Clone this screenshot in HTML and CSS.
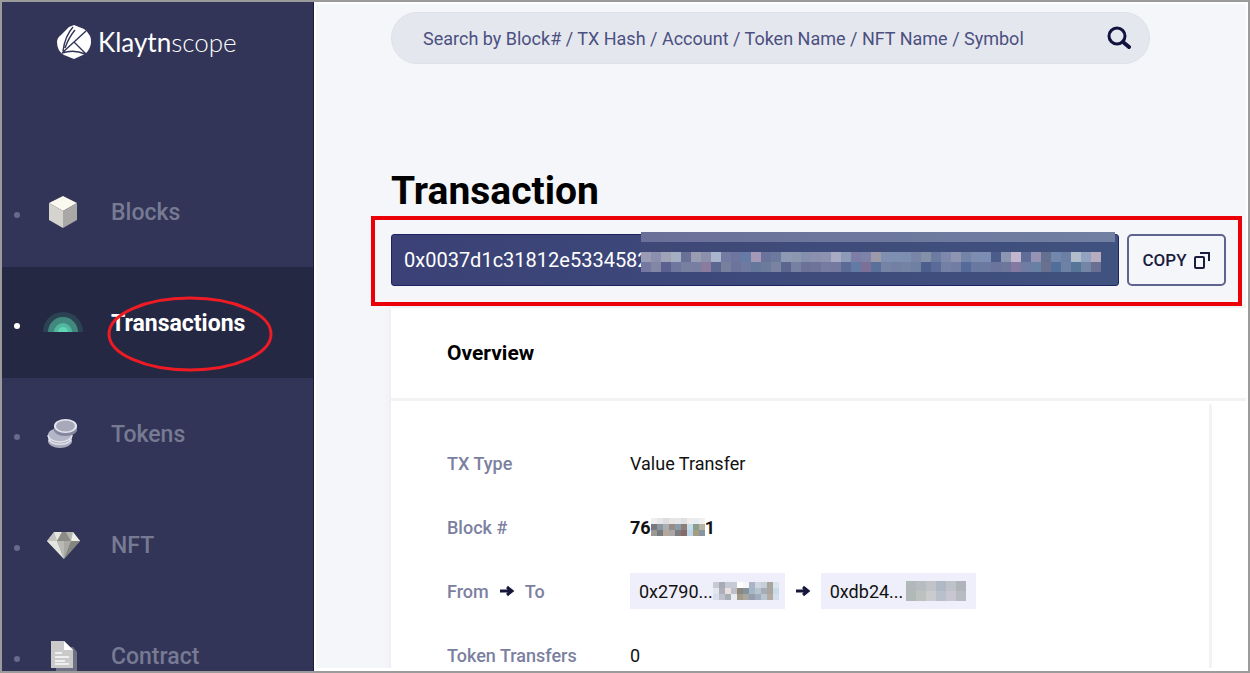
FILE: index.html
```
<!DOCTYPE html>
<html lang="en">
<head>
    <meta charset="UTF-8">
    <meta name="viewport" content="width=device-width, initial-scale=1.0">
    <title>Klaytnscope</title>
    <link rel="stylesheet" href="styles.css">
</head>
<body>
    <!-- Sidebar Navigation -->
    <nav class="sidebar">
        <a href="#" class="logo">
            <svg width="36" height="36" viewBox="0 0 36 36">
                <path d="M18 1 L28 5 Q36 11 35 19 Q34 26 29 30 L18 35 L8 31 Q1 27 1 18 Q1 14 5 11 L13 3 Z" fill="#fff"/>
                <path d="M17 3 Q9 12 7 27 M19 6 Q13 13 9 24 M30 7 L6 29 M18 18 L30 30 M6 29 Q18 25 29 30" fill="none" stroke="#323557" stroke-width="1.400"/>
            </svg>
            <span class="logo-text">Klaytn<span class="logo-light">scope</span></span>
        </a>
        <ul class="menu">
            <li>
                <a href="#" class="nav-link">
                    <span class="dot"></span>
                    <svg class="nav-icon" width="42" height="42" viewBox="0 0 42 42">
                        <path d="M21 5 L35 12 L21 20 L7 12 Z" fill="#fbf8ee"/>
                        <path d="M7 12 L21 20 V37 L7 29 Z" fill="#d5d3ce"/>
                        <path d="M35 12 L21 20 V37 L35 29 Z" fill="#aaa8a6"/>
                    </svg>
                    <span class="nav-text">Blocks</span>
                </a>
            </li>
            <li>
                <a href="#" class="nav-link active">
                    <span class="dot"></span>
                    <svg class="nav-icon" width="42" height="42" viewBox="0 0 42 42">
                        <path d="M1 30 A20 20 0 0 1 41 30 Z" fill="#2b4253"/>
                        <path d="M6 30 A15 15 0 0 1 36 30 Z" fill="#41897f"/>
                        <path d="M12 30 A9 9 0 0 1 30 30 Z" fill="#52b79f"/>
                        <path d="M16 30 A5 5 0 0 1 26 30 Z" fill="#5fd6b6"/>
                    </svg>
                    <span class="nav-text">Transactions</span>
                    <svg class="circle-mark" width="166" height="76" viewBox="0 0 166 76">
                        <ellipse cx="83" cy="38" rx="81" ry="36" fill="none" stroke="#ed1c24" stroke-width="3"/>
                    </svg>
                </a>
            </li>
            <li>
                <a href="#" class="nav-link">
                    <span class="dot"></span>
                    <svg class="nav-icon" width="42" height="42" viewBox="0 0 42 42">
                        <path d="M6 22 V28 A12 7 0 0 0 30 28 V22 Z" fill="#a9abbd"/>
                        <ellipse cx="18" cy="22" rx="12" ry="7" fill="#b4b6c8"/>
                        <path d="M6 22 A12 7 0 0 0 30 22 M7 27 A12 7 0 0 0 29 27" fill="none" stroke="#e2e3ec" stroke-width="1.500"/>
                        <path d="M12 14 V18 A12 7 0 0 0 35 18 V14 Z" fill="#8486a0"/>
                        <ellipse cx="23.500" cy="13" rx="11.500" ry="7" fill="#e6e7ee"/>
                        <ellipse cx="23.500" cy="13" rx="9.500" ry="5.500" fill="#a7a9bb"/>
                    </svg>
                    <span class="nav-text">Tokens</span>
                </a>
            </li>
            <li>
                <a href="#" class="nav-link">
                    <span class="dot"></span>
                    <svg class="nav-icon" width="42" height="42" viewBox="0 0 42 42">
                        <path d="M12 8 H31 L38 17 L22 35 L5 17 Z" fill="#a9a9a5"/>
                        <path d="M12 8 L15 17 H5 Z" fill="#c4c4c0"/>
                        <path d="M12 8 L20 8 L15 17 Z" fill="#e6e6e2"/>
                        <path d="M20 8 H24 L29 17 H15 Z" fill="#8c8c87"/>
                        <path d="M31 8 L24 8 L29 17 Z" fill="#b5b5b0"/>
                        <path d="M31 8 L38 17 H29 Z" fill="#ecece8"/>
                        <path d="M5 17 H15 L22 35 Z" fill="#e4e4e0"/>
                        <path d="M15 17 H22 V35 Z" fill="#b9b9b5"/>
                        <path d="M38 17 H29 L22 35 Z" fill="#85857f"/>
                    </svg>
                    <span class="nav-text">NFT</span>
                </a>
            </li>
            <li>
                <a href="#" class="nav-link">
                    <span class="dot"></span>
                    <svg class="nav-icon" width="42" height="42" viewBox="0 0 42 42">
                        <path d="M14 12 H31 L35 17 V38 H14 Z" fill="#6f7285"/>
                        <path d="M9 6 H22 L31 15 V33 H9 Z" fill="#cacaca"/>
                        <path d="M22 6 L31 15 H22 Z" fill="#fff"/>
                        <path d="M13 18 H20 M13 22 H27 M13 26 H23 M13 29 H27" stroke="#efefef" stroke-width="2"/>
                    </svg>
                    <span class="nav-text">Contract</span>
                </a>
            </li>
        </ul>
    </nav>

    <!-- Page Content -->
    <main class="content">
        <form class="search">
            <input type="text" class="search-input" aria-label="Search" placeholder="Search by Block# / TX Hash / Account / Token Name / NFT Name / Symbol">
            <button type="button" class="search-button" aria-label="Search">
                <svg width="26" height="26" viewBox="0 0 26 26" fill="none" stroke="#11123d">
                    <circle cx="12" cy="11" r="8" stroke-width="3"/>
                    <path d="M18 17 L24 22" stroke-width="4" stroke-linecap="round"/>
                </svg>
            </button>
        </form>

        <h1>Transaction</h1>

        <div class="hash-row">
            <div class="hash">
                <span class="hash-text">0x0037d1c31812e5334582</span>
                <div class="hash-cover">
                    <div class="hash-band"></div>
                    <svg class="mosaic" id="hashMosaic"></svg>
                </div>
            </div>
            <button type="button" class="copy-button">
                COPY
                <svg width="18" height="18" viewBox="0 0 18 18" fill="none" stroke="#1c1d3e" stroke-width="2">
                    <rect x="2" y="6" width="9" height="11" rx="1"/>
                    <path d="M7 2 H16 V10"/>
                </svg>
            </button>
            <div class="box-mark"></div>
        </div>

        <section class="card">
            <h2>Overview</h2>
            <dl class="details">
                <dt>TX Type</dt>
                <dd>Value Transfer</dd>

                <dt>Block #</dt>
                <dd class="block-number">76<svg class="mosaic" id="blockMosaic"></svg>1</dd>

                <dt>
                    From
                    <svg class="arrow" width="16" height="12" viewBox="0 0 16 12">
                        <path d="M1 6 H13 M8 2 L13 6 L8 10" fill="none" stroke="#15163a" stroke-width="3"/>
                    </svg>
                    To
                </dt>
                <dd>
                    <a href="#" class="address">0x2790...<svg class="mosaic" id="fromMosaic"></svg></a>
                    <svg class="arrow" width="16" height="12" viewBox="0 0 16 12">
                        <path d="M1 6 H13 M8 2 L13 6 L8 10" fill="none" stroke="#15163a" stroke-width="3"/>
                    </svg>
                    <a href="#" class="address address-to">0xdb24...<svg class="mosaic" id="toMosaic"></svg></a>
                </dd>

                <dt>Token Transfers</dt>
                <dd>0</dd>
            </dl>
        </section>
    </main>

    <script src="script.js"></script>
</body>
</html>
```
FILE: styles.css
```
* {
    box-sizing: border-box;
}

body {
    margin: 0;
    height: 100vh;
    display: flex;
    overflow: hidden;
    border: 2px solid #9b9b9b;
    font-family: Roboto, "Liberation Sans", sans-serif;
    background-color: #f5f6f9;
}

a {
    text-decoration: none;
}

/* Sidebar styles */
.sidebar {
    width: 312px;
    flex-shrink: 0;
    overflow: hidden;
    background-color: #323557;
    border-right: 1px solid #1a1c42;
}

.logo {
    display: flex;
    align-items: center;
    gap: 6px;
    height: 154px;
    padding: 22px 0 96px 54px;
}

.logo-text {
    font-family: Lato, sans-serif;
    font-size: 26px;
    color: #fff;
}

.logo-light {
    font-weight: 300;
}

/* Sidebar menu styles */
.menu {
    list-style: none;
    margin: 0;
    padding: 0;
}

.nav-link {
    position: relative;
    display: flex;
    align-items: center;
    height: 111px;
    padding-left: 12px;
    color: #777a93;
    font-size: 23px;
    font-weight: 500;
}

.dot {
    width: 6px;
    height: 6px;
    margin-top: 6px;
    border-radius: 50%;
    background-color: #676a88;
}

.nav-icon {
    margin-left: 22px;
}

.nav-text {
    margin-left: 27px;
    padding-top: 2px;
}

.active {
    background-color: #252843;
    color: #fff;
    font-weight: 700;
}

.active .dot {
    background-color: #fff;
}

.circle-mark {
    position: absolute;
    left: 105px;
    top: 29px;
}

/* Content area styles */
.content {
    flex: 1;
    min-width: 0;
    overflow: hidden;
    padding: 8px 0 0 75px;
    border: 2px solid #fff;
    border-bottom-width: 3px;
    background-color: #f5f6f9;
}

.search {
    display: flex;
    align-items: center;
    height: 52px;
    margin-right: 96px;
    padding: 0 18px 0 31px;
    border: 1px solid #dfe1ea;
    border-radius: 26px;
    background-color: #e5e7ef;
}

.search-input {
    flex: 1;
    min-width: 0;
    padding: 0;
    border: none;
    outline: none;
    background: none;
    color: #4b5080;
    font-family: inherit;
    font-size: 18px;
}

.search-input::placeholder {
    color: #4b5080;
    opacity: 1;
}

.search-button {
    display: flex;
    padding: 0;
    border: none;
    background: none;
    cursor: pointer;
}

h1 {
    margin: 103px 0 19px;
    font-size: 39px;
    font-weight: 700;
    line-height: 48px;
    color: #000;
}

/* Hash and copy button */
.hash-row {
    position: relative;
    display: flex;
    gap: 8px;
    margin-right: 20px;
}

.hash {
    position: relative;
    flex: 1;
    height: 52px;
    padding-left: 12px;
    border: 1px solid #1d2260;
    border-radius: 3px;
    background: linear-gradient(to right, #3b4176, #40527f);
}

.hash-text {
    font-size: 20px;
    line-height: 50px;
    color: #fff;
}

.hash-cover {
    position: absolute;
    left: 249px;
    right: 3px;
    top: -3px;
    height: 40px;
    background: linear-gradient(to right, #3f4877, #40527f);
}

.hash-band {
    height: 10px;
    margin-bottom: 10px;
    background: linear-gradient(to right, #6b7099, #707fa2);
}

.copy-button {
    display: flex;
    align-items: center;
    justify-content: center;
    gap: 6px;
    width: 99px;
    padding: 0;
    border: 2px solid #5f648f;
    border-radius: 5px;
    background-color: #f5f6f9;
    color: #1c1d3e;
    font-family: inherit;
    font-size: 17px;
    font-weight: 500;
    cursor: pointer;
}

.box-mark {
    position: absolute;
    inset: -18px -16px -20px -20px;
    border: 4px solid #ec0008;
    pointer-events: none;
}

/* Overview card */
.card {
    margin-top: 22px;
    background-color: #fff;
    box-shadow: 0 0 6px #e3e5ee;
}

h2 {
    margin: 0;
    padding: 0 56px;
    border-bottom: 3px solid #f3f3f4;
    font-size: 21px;
    font-weight: 700;
    line-height: 90px;
    color: #000;
}

.details {
    display: grid;
    grid-template-columns: 183px 1fr;
    grid-auto-rows: 64px;
    align-items: center;
    margin: 3px 34px 0 0;
    padding: 27px 0 0 56px;
    border-right: 3px solid #f3f3f4;
    font-size: 18px;
}

.details dt,
.details dd {
    display: flex;
    align-items: center;
    margin: 0;
    white-space: nowrap;
}

.details dt {
    color: #7c80a0;
    font-weight: 500;
}

.details dd {
    color: #111;
}

.details .block-number {
    font-weight: 700;
}

.arrow {
    margin: 0 10px;
}

.address {
    display: flex;
    align-items: center;
    height: 36px;
    padding: 0 6px 0 9px;
    background-color: #eeeffa;
    color: #111;
}

.address-to {
    gap: 3px;
    padding-right: 10px;
}

.mosaic {
    display: block;
}
```
FILE: script.js
```
// Fill a mosaic svg with square cells, one string of colours per row
function drawMosaic(id, size, rows) {
    const svg = document.getElementById(id);
    const cells = rows.map(row => row.split(" "));
    svg.setAttribute("width", cells[0].length * size);
    svg.setAttribute("height", cells.length * size);
    svg.setAttribute("shape-rendering", "crispEdges");
    cells.forEach((row, y) => row.forEach((color, x) => {
        const rect = document.createElementNS("http://www.w3.org/2000/svg", "rect");
        rect.setAttribute("x", x * size);
        rect.setAttribute("y", y * size);
        rect.setAttribute("width", size);
        rect.setAttribute("height", size);
        rect.setAttribute("fill", "#" + color);
        svg.appendChild(rect);
    }));
}

drawMosaic("hashMosaic", 10, [
    "9a9cb5 8c8fae 9fa3b8 a5afc2 6a7199 9a9cb2 8d90ad a9b5cc 747ba3 6c769f 657ba5 a498b4 6a739c 6d789f 8e9ab4 8e97b0 8590ae 8d8fae 8c93b0 a9abc5 8e9bb7 7c7ea8 7d82a9 9c99a8 7f8fb2 7f8fb2 7d8fb0 7884a8 8490a8 6b7ba2 7d88ac 8d95b2 7384a9 7c8db1 7c8eb3 4b5c8b 8c96b1 c3b5ce 5e6e98 9592b4 656f90 7187ab 6c80a5 b1bdca 92a3bf b7acc0",
    "7379a0 8287a5 5a6190 70779e 7880a1 777ea2 8b7b9c 5c6691 77819e 6c749b 707aa0 66779c 6c7a9c 7b83a3 5b658e 7680a0 6b7197 6e7399 767ca1 7579a0 5c6a98 627ba5 7c7097 58709b 7683a5 7380a3 7482a4 7080a2 4c5e8e 5a6b98 7480a4 737ca2 546a98 68789e 6b789f 6a749c 6e769c 8479a0 707da2 6980a5 6a708f 50709b 6f82a5 557599 7386a5 6a7092"
]);

drawMosaic("blockMosaic", 6, [
    "eeeef0 e4e7e9 dddddf e7e4e1 e4e8ec e1dfdf efecea e6edf2 f0f1ee",
    "77777f 8e979e a8aeb5 998c87 8b9ba9 8f7d77 c3ddec 8d9c8c b5b3a5",
    "9c9894 777c82 b5a89b aaa6a5 807b81 856c68 b9d5e7 a69c84 8695a0"
]);

drawMosaic("fromMosaic", 6, [
    "c9c9d1 a9aab5 c5c9d3 c6cad5 ffffff f6f6f8 a9b4c7 d1d5df c5cfda a8a49e d9e4ed",
    "e2e6f1 adb0bb e9dfdf bec0c7 8f877e 83939c a6b5c7 b7c5cf a6adb7 aaa59e cbdae7",
    "d9dfea bfc2cc a9aeb6 e9ecf3 a49a88 aaa7a0 939eae a2acbc b8c5d3 b5aaa1 d3dfec"
]);

drawMosaic("toMosaic", 10, [
    "b0b8bc b6bdc0 c0c4c7 b0b8c5 bec3c9 aeb4b9",
    "b1b9b8 bdc1c0 c9cbcd b9bfcb cac5d3 b7bcc1"
]);
```
